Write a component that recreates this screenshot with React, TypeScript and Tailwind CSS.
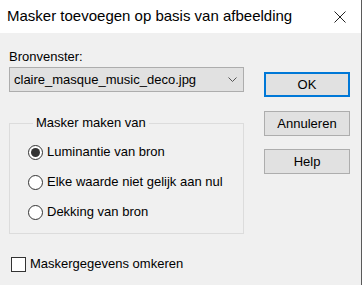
import React from 'react';

const RadioRow: React.FC<{ label: string; checked?: boolean }> = ({ label, checked }) => (
  <div className="h-[30px] flex items-center">
    <span className="w-[15px] h-[15px] rounded-full border border-[#333333] bg-white flex items-center justify-center shrink-0">
      {checked && <span className="w-[9px] h-[9px] rounded-full bg-[#333333]" />}
    </span>
    <span className="ml-[4px] whitespace-nowrap">{label}</span>
  </div>
);

const DialogButton: React.FC<{ label: string; primary?: boolean; className?: string }> = ({ label, primary, className }) => (
  <div
    className={`h-[25px] w-[86px] bg-[#e1e1e1] flex items-center justify-center ${
      primary ? 'border-2 border-[#0078d7]' : 'border border-[#adadad]'
    } ${className ?? ''}`}
  >
    {label}
  </div>
);

export default function App() {
  return (
    <div className="w-[362px] h-[285px] flex flex-col bg-[#f0f0f0] border-r border-[#5a5a5a] text-[13px] text-black font-['Liberation_Sans',Arial,sans-serif]">
      <div className="h-[33px] bg-white flex items-center justify-between pl-[7px] pr-[15px] shrink-0">
        <span className="text-[15px] whitespace-nowrap">Masker toevoegen op basis van afbeelding</span>
        <svg width="12" height="12" viewBox="0 0 12 12" className="text-[#222]">
          <path d="M0.5 0.5 L11.5 11.5 M11.5 0.5 L0.5 11.5" stroke="currentColor" strokeWidth="1" />
        </svg>
      </div>
      <div className="flex flex-1 pl-[9px]">
        <div className="w-[235px] flex flex-col">
          <div className="mt-[13px] h-[21px] leading-[21px]">Bronvenster:</div>
          <div className="h-[25px] border border-[#adadad] bg-[#e1e1e1] flex items-center justify-between pl-[4px] pr-[6px]">
            <span>claire_masque_music_deco.jpg</span>
            <svg width="9" height="6" viewBox="0 0 9 6" className="text-[#555]">
              <path d="M0.5 0.5 L4.5 4.5 L8.5 0.5" fill="none" stroke="currentColor" strokeWidth="1" />
            </svg>
          </div>
          <fieldset className="mt-[22px] border border-[#dcdcdc] pl-[18px] pt-[5px] pb-[6px]">
            <legend className="ml-[5px] px-[3px] h-[18px] leading-[18px]">Masker maken van</legend>
            <RadioRow label="Luminantie van bron" checked />
            <RadioRow label="Elke waarde niet gelijk aan nul" />
            <RadioRow label="Dekking van bron" />
          </fieldset>
          <div className="mt-[22px] ml-[2px] h-[16px] flex items-center">
            <span className="w-[15px] h-[15px] border border-[#333333] bg-white" />
            <span className="ml-[4px]">Maskergegevens omkeren</span>
          </div>
        </div>
        <div className="ml-[20px] flex flex-col">
          <DialogButton label="OK" primary className="mt-[39px]" />
          <DialogButton label="Annuleren" className="mt-[14px]" />
          <DialogButton label="Help" className="mt-[13px]" />
        </div>
      </div>
    </div>
  );
}
